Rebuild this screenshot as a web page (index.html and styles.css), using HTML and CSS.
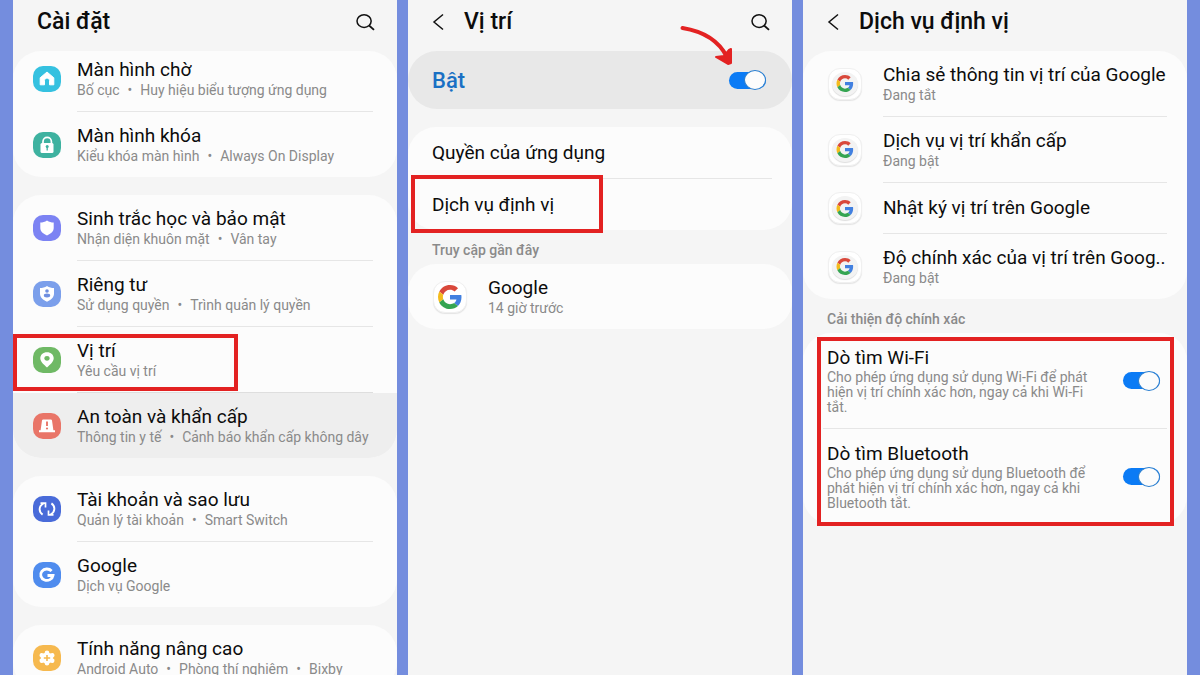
FILE: index.html
```html
<!DOCTYPE html>
<html lang="vi">
<head>
    <meta charset="UTF-8">
    <meta name="viewport" content="width=device-width, initial-scale=1.0">
    <title>Cài đặt - Vị trí</title>

    <link rel="stylesheet" href="styles.css">
</head>
<body>
    <!-- Shared shapes -->
    <svg class="defs" aria-hidden="true">
        <symbol id="search" viewBox="0 0 20 18">
            <ellipse cx="8.500" cy="7.500" rx="7.500" ry="6.700" fill="none" stroke="#111" stroke-width="1.600"/>
            <path d="M13.800 12.200L19 16.800" stroke="#111" stroke-width="1.900"/>
        </symbol>
        <symbol id="back" viewBox="0 0 12 18">
            <path d="M11 1.500L2 9l9 7.500" fill="none" stroke="#111" stroke-width="1.500"/>
        </symbol>
        <symbol id="google" viewBox="0 0 48 48">
            <path fill="#d9483b" d="M24 9.500c3.540 0 6.710 1.220 9.210 3.600l6.850-6.850C35.900 2.380 30.470 0 24 0 14.620 0 6.510 5.380 2.560 13.220l7.980 6.190C12.430 13.720 17.740 9.500 24 9.500z"/>
            <path fill="#4280e0" d="M46.980 24.550c0-1.570-.15-3.090-.38-4.550H24v9.020h12.940c-.58 2.960-2.260 5.480-4.780 7.180l7.730 6c4.510-4.180 7.090-10.360 7.090-17.650z"/>
            <path fill="#f4bb1c" d="M10.530 28.590A14.500 14.500 0 0 1 9.770 24c0-1.600.27-3.140.76-4.590l-7.980-6.190A23.900 23.900 0 0 0 0 24c0 3.880.92 7.540 2.560 10.780l7.970-6.190z"/>
            <path fill="#35a552" d="M24 48c6.480 0 11.930-2.130 15.890-5.810l-7.730-6c-2.150 1.450-4.920 2.300-8.160 2.300-6.260 0-11.570-4.220-13.470-9.910l-7.980 6.190C6.510 42.620 14.620 48 24 48z"/>
        </symbol>
    </svg>

    <main class="screens">
        <!-- Settings list -->
        <section class="screen">
            <header class="bar">
                <h1>Cài đặt</h1>
                <button type="button" class="icon-btn search-btn" aria-label="Tìm kiếm"><svg><use href="#search"/></svg></button>
            </header>

            <ul class="card">
                <li><a class="row row-cut" href="#">
                    <svg class="app-icon" viewBox="0 0 28 26"><rect width="28" height="26" rx="10" fill="#35c1e0"/><path d="M14 6L7.200 11.800v7h4.300v-4.300a2.500 2.500 0 0 1 5 0v4.300h4.300v-7z" fill="#fff" stroke="#fff" stroke-linejoin="round"/></svg>
                    <span class="row-text"><span class="name">Màn hình chờ</span><span class="note">Bố cục<i>•</i>Huy hiệu biểu tượng ứng dụng</span></span>
                </a></li>
                <li class="divider" role="separator"></li>
                <li><a class="row" href="#">
                    <svg class="app-icon" viewBox="0 0 28 26"><rect width="28" height="26" rx="10" fill="#3eb2a0"/><path d="M10 12V9.500a4.200 4.200 0 0 1 8.400 0V12" fill="none" stroke="#fff" stroke-width="1.700"/><rect x="7.500" y="11" width="13" height="10" rx="1.500" fill="#fff"/><circle cx="14.200" cy="14.500" r="1.500" fill="#3eb2a0"/><path d="M14.200 15v3.500" stroke="#3eb2a0" stroke-width="1.300"/></svg>
                    <span class="row-text"><span class="name">Màn hình khóa</span><span class="note">Kiểu khóa màn hình<i>•</i>Always On Display</span></span>
                </a></li>
            </ul>

            <ul class="card">
                <li><a class="row" href="#">
                    <svg class="app-icon" viewBox="0 0 28 26"><rect width="28" height="26" rx="10" fill="#7c83f3"/><path d="M14 5.500c2.200 1.500 4.300 2 6.700 2.100v5.500c0 3.600-3 5.800-6.700 7.400-3.700-1.600-6.700-3.800-6.700-7.400V7.600c2.400-.1 4.500-.6 6.700-2.100z" fill="#fff"/></svg>
                    <span class="row-text"><span class="name">Sinh trắc học và bảo mật</span><span class="note">Nhận diện khuôn mặt<i>•</i>Vân tay</span></span>
                </a></li>
                <li class="divider" role="separator"></li>
                <li><a class="row" href="#">
                    <svg class="app-icon" viewBox="0 0 28 26"><rect width="28" height="26" rx="10" fill="#7b9feb"/><path d="M14 5c2.200 1.500 4.500 2 7 2.100v5.700c0 3.800-3.200 6.200-7 7.900-3.800-1.700-7-4.100-7-7.900V7.100c2.500-.1 4.800-.6 7-2.100z" fill="#fff"/><circle cx="14" cy="10" r="1.800" fill="#6f8fe0"/><ellipse cx="14" cy="14.500" rx="3.200" ry="1.900" fill="#6f8fe0"/></svg>
                    <span class="row-text"><span class="name">Riêng tư</span><span class="note">Sử dụng quyền<i>•</i>Trình quản lý quyền</span></span>
                </a></li>
                <li class="divider" role="separator"></li>
                <li class="marked mark-location"><a class="row" href="#">
                    <svg class="app-icon" viewBox="0 0 28 26"><rect width="28" height="26" rx="10" fill="#6fb965"/><path d="M14 5.200c3.900 0 6.700 2.600 6.700 6 0 3.700-3.700 6.200-6.700 9.400-3-3.200-6.700-5.700-6.700-9.400 0-3.400 2.800-6 6.700-6z" fill="#fff"/><ellipse cx="14" cy="11.300" rx="2.600" ry="2.400" fill="#6fb965"/></svg>
                    <span class="row-text"><span class="name">Vị trí</span><span class="note">Yêu cầu vị trí</span></span>
                </a></li>
                <li class="divider divider-pressed" role="separator"></li>
                <li><a class="row row-pressed" href="#">
                    <svg class="app-icon" viewBox="0 0 28 26"><rect width="28" height="26" rx="10" fill="#e97568"/><path d="M10.200 6.500h7.600q1 0 1.200 1l1.400 9.700H22v2H6v-2h1.600L9 7.500q.2-1 1.200-1z" fill="#fff"/><path d="M14 8.500v4.500" stroke="#e97568" stroke-width="1.900"/><circle cx="14" cy="15.500" r="1.100" fill="#e97568"/></svg>
                    <span class="row-text"><span class="name">An toàn và khẩn cấp</span><span class="note">Thông tin y tế<i>•</i>Cảnh báo khẩn cấp không dây</span></span>
                </a></li>
            </ul>

            <ul class="card">
                <li><a class="row" href="#">
                    <svg class="app-icon" viewBox="0 0 28 26"><rect width="28" height="26" rx="10" fill="#496bd9"/><path d="M10.500 7.500C5.500 10 5.500 15.800 9.600 18.600M17.500 18.500c5-2.500 5-8.300.9-11.100" fill="none" stroke="#fff" stroke-width="1.900"/><path d="M7.500 7.200h5V11.500M20.500 18.800h-5v-4.300" fill="none" stroke="#fff" stroke-width="1.700"/></svg>
                    <span class="row-text"><span class="name">Tài khoản và sao lưu</span><span class="note">Quản lý tài khoản<i>•</i>Smart Switch</span></span>
                </a></li>
                <li class="divider" role="separator"></li>
                <li><a class="row" href="#">
                    <svg class="app-icon" viewBox="0 0 28 26"><rect width="28" height="26" rx="10" fill="#4f8cee"/><path d="M18.600 9a6.200 5.700 0 1 0 1.400 4.500H14.500" fill="none" stroke="#fff" stroke-width="2.800"/></svg>
                    <span class="row-text"><span class="name">Google</span><span class="note">Dịch vụ Google</span></span>
                </a></li>
            </ul>

            <ul class="card">
                <li><a class="row" href="#">
                    <svg class="app-icon" viewBox="0 0 28 26"><rect width="28" height="26" rx="10" fill="#f6b94f"/><ellipse cx="14" cy="13" rx="6" ry="5.500" fill="#fff"/><path d="M14 7.800v10.400M8.800 10.400l10.400 5.200M19.200 10.400L8.800 15.600" stroke="#fff" stroke-width="4.600" stroke-linecap="round"/><path d="M14 10v6M10.800 13h6.400" stroke="#f6b94f" stroke-width="1.600"/></svg>
                    <span class="row-text"><span class="name">Tính năng nâng cao</span><span class="note">Android Auto<i>•</i>Phòng thí nghiệm<i>•</i>Bixby</span></span>
                </a></li>
            </ul>
        </section>

        <!-- Location -->
        <section class="screen">
            <header class="bar">
                <button type="button" class="icon-btn back-btn" aria-label="Quay lại"><svg><use href="#back"/></svg></button>
                <h1>Vị trí</h1>
                <button type="button" class="icon-btn search-btn" aria-label="Tìm kiếm"><svg><use href="#search"/></svg></button>
            </header>

            <div class="master">
                <label for="locationOn">Bật</label>
                <input type="checkbox" class="switch" id="locationOn" checked>
                <svg class="arrow" viewBox="0 0 62 42" aria-hidden="true"><path d="M2.500 3C21 6 38 14 47 32" fill="none" stroke="#e32222" stroke-width="4" stroke-linecap="round"/><path d="M36 32l8-1 5-6 2-1 0 14-3 1z" fill="#e32222" stroke="#e32222" stroke-width="2" stroke-linejoin="round"/></svg>
            </div>

            <ul class="card">
                <li><a class="row row-plain" href="#"><span class="name">Quyền của ứng dụng</span></a></li>
                <li class="divider divider-plain" role="separator"></li>
                <li class="marked mark-services"><a class="row row-plain" href="#"><span class="name">Dịch vụ định vị</span></a></li>
            </ul>

            <h2>Truy cập gần đây</h2>
            <ul class="card">
                <li><a class="row row-app" href="#">
                    <span class="google-tile google-large"><svg><use href="#google"/></svg></span>
                    <span class="row-text"><span class="name">Google</span><span class="note">14 giờ trước</span></span>
                </a></li>
            </ul>
        </section>

        <!-- Location services -->
        <section class="screen">
            <header class="bar">
                <button type="button" class="icon-btn back-btn" aria-label="Quay lại"><svg><use href="#back"/></svg></button>
                <h1>Dịch vụ định vị</h1>
            </header>

            <ul class="card">
                <li><a class="row row-app" href="#">
                    <span class="google-tile"><span class="disc"><svg><use href="#google"/></svg></span></span>
                    <span class="row-text"><span class="name">Chia sẻ thông tin vị trí của Google</span><span class="note">Đang tắt</span></span>
                </a></li>
                <li class="divider divider-app" role="separator"></li>
                <li><a class="row row-app" href="#">
                    <span class="google-tile"><span class="disc"><svg><use href="#google"/></svg></span></span>
                    <span class="row-text"><span class="name">Dịch vụ vị trí khẩn cấp</span><span class="note">Đang bật</span></span>
                </a></li>
                <li class="divider divider-app" role="separator"></li>
                <li><a class="row row-app row-single" href="#">
                    <span class="google-tile"><span class="disc"><svg><use href="#google"/></svg></span></span>
                    <span class="row-text"><span class="name">Nhật ký vị trí trên Google</span></span>
                </a></li>
                <li class="divider divider-app" role="separator"></li>
                <li><a class="row row-app" href="#">
                    <span class="google-tile"><span class="disc"><svg><use href="#google"/></svg></span></span>
                    <span class="row-text"><span class="name">Độ chính xác của vị trí trên Goog..</span><span class="note">Đang bật</span></span>
                </a></li>
            </ul>

            <h2>Cải thiện độ chính xác</h2>
            <ul class="card marked mark-scan">
                <li class="scan">
                    <label for="wifiScan"><span class="name">Dò tìm Wi-Fi</span><span class="note">Cho phép ứng dụng sử dụng Wi-Fi để phát hiện vị trí chính xác hơn, ngay cả khi Wi-Fi tắt.</span></label>
                    <input type="checkbox" class="switch" id="wifiScan" checked>
                </li>
                <li class="divider divider-scan" role="separator"></li>
                <li class="scan">
                    <label for="bluetoothScan"><span class="name">Dò tìm Bluetooth</span><span class="note">Cho phép ứng dụng sử dụng Bluetooth để phát hiện vị trí chính xác hơn, ngay cả khi Bluetooth tắt.</span></label>
                    <input type="checkbox" class="switch" id="bluetoothScan" checked>
                </li>
            </ul>
        </section>
    </main>
</body>
</html>
```
FILE: styles.css
```css
*,
*::before,
*::after {
    box-sizing: border-box;
}

body {
    margin: 0;
    font-family: Roboto, "Liberation Sans", sans-serif;
    background: #748dde;
    color: #0c0c0c;
}

ul {
    list-style: none;
    margin: 0;
    padding: 0;
}

a {
    color: inherit;
    text-decoration: none;
}

svg {
    display: block;
}

.defs {
    position: absolute;
    width: 0;
    height: 0;
}

/* Three phone screens side by side */
.screens {
    display: grid;
    grid-template-columns: repeat(3, minmax(0, 1fr));
    gap: 11px;
    height: 100vh;
    padding: 0 13px;
}

.screen {
    background: #f5f5f5;
    overflow: hidden;
}

/* Title bar */
.bar {
    display: flex;
    align-items: center;
    height: 51px;
    padding: 0 22px 7px 24px;
}

.bar h1 {
    margin: 0;
    font-size: 23px;
    font-weight: 500;
    line-height: 28px;
}

.icon-btn {
    padding: 0;
    border: none;
    background: none;
    cursor: pointer;
}

.search-btn {
    margin-left: auto;
}

.search-btn svg {
    width: 19px;
    height: 17px;
}

.back-btn {
    margin-right: 20px;
}

.back-btn svg {
    width: 12px;
    height: 18px;
}

/* Cards */
.card {
    background: #fcfcfc;
    border-radius: 28px;
}

.card + .card,
.master + .card {
    margin-top: 18px;
}

.divider {
    height: 1px;
    margin: 0 24px 0 64px;
    background: #e6e6e6;
}

.divider-plain {
    margin: 0 20px 0 24px;
}

.divider-app {
    margin: 0 20px 0 80px;
}

.divider-scan {
    margin: 0 20px;
}

.divider-pressed {
    background: #dedede;
}

.row {
    display: flex;
    align-items: center;
    gap: 16px;
    padding: 12px 20px;
}

.row-cut {
    padding-top: 7px;
}

.row-pressed {
    background: #eeeeee;
    border-radius: 0 0 28px 28px;
}

.row-plain {
    padding: 13px 24px;
}

.row-app {
    gap: 21px;
    padding-left: 25px;
    padding-right: 8px;
}

.row-single {
    padding-top: 9px;
    padding-bottom: 9px;
}

.row-text {
    flex: 1;
    min-width: 0;
}

.name,
.note {
    display: block;
    white-space: nowrap;
}

.name {
    font-size: 19px;
    line-height: 24px;
}

.note {
    font-size: 14px;
    line-height: 17px;
    color: #8a8a8a;
}

.note i {
    margin: 0 8px;
    font-style: normal;
}

.row-plain .name {
    line-height: 25px;
}

.app-icon {
    width: 28px;
    height: 26px;
}

/* Google tiles */
.google-tile {
    display: flex;
    align-items: center;
    justify-content: center;
    width: 34px;
    height: 32px;
    border: 1px solid #f0f0f0;
    border-radius: 12px;
    background: #ffffff;
    box-shadow: 0 1px 1px #e4e4e4;
}

.disc {
    display: flex;
    align-items: center;
    justify-content: center;
    width: 26px;
    height: 24px;
    border-radius: 50%;
    background: #f3f3f3;
    box-shadow: 0 1px 1px #dedede;
}

.disc svg {
    width: 18px;
    height: 17px;
}

.google-large svg {
    width: 26px;
    height: 24px;
}

h2 {
    margin: 0;
    padding: 12px 24px 5px;
    font-size: 14px;
    font-weight: 500;
    line-height: 17px;
    color: #8a8a8a;
}

/* Main switch */
.master {
    position: relative;
    display: flex;
    align-items: center;
    justify-content: space-between;
    height: 58px;
    padding: 0 26px 0 24px;
    border-radius: 29px;
    background: #e8e8e8;
}

.master label {
    font-size: 22px;
    font-weight: 500;
    color: #1a70c4;
}

.switch {
    appearance: none;
    display: flex;
    align-items: center;
    justify-content: flex-end;
    flex: none;
    width: 37px;
    height: 17px;
    margin: 0;
    border-radius: 9px;
    background: #0b7bf5;
    cursor: pointer;
}

.switch::before {
    content: "";
    flex: none;
    width: 22px;
    height: 20px;
    border: 1px solid #2b7fd0;
    border-radius: 50%;
    background: #fcfcfc;
}

.switch:not(:checked) {
    justify-content: flex-start;
    background: #b5b5b5;
}

.arrow {
    position: absolute;
    top: -26px;
    right: 50px;
    width: 62px;
    height: 42px;
}

/* Scanning options */
.scan {
    display: flex;
    align-items: center;
    justify-content: space-between;
    padding: 13px 27px 13px 24px;
}

.scan label {
    width: 272px;
}

.scan .note {
    line-height: 15px;
    white-space: normal;
}

/* Red frames */
.marked {
    position: relative;
}

.marked::after {
    content: "";
    position: absolute;
    border: 4px solid #e32222;
    pointer-events: none;
}

.mark-location::after {
    top: 7px;
    bottom: 1px;
    left: 0;
    width: 225px;
}

.mark-services::after {
    top: -4px;
    bottom: -3px;
    left: 3px;
    width: 192px;
}

.mark-scan::after {
    top: 4px;
    bottom: -2px;
    left: 14px;
    right: 13px;
}
```
